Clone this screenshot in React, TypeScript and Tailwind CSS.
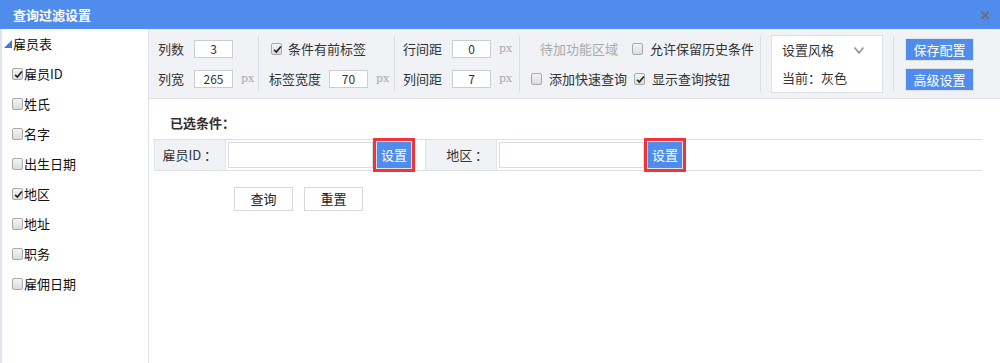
import React from 'react';

const Box: React.FC<{ checked?: boolean }> = ({ checked }) => (
    <span className="relative inline-flex w-[11px] h-[12px] shrink-0 rounded-[2px] border border-[#a9a9a9] bg-gradient-to-b from-[#f4f4f4] to-[#dcdcdc]">
        {checked && (
            <svg viewBox="0 0 12 12" className="absolute left-[1px] top-[1px] w-[9px] h-[9px]">
                <path d="M1.5 6.5 L4.5 9.5 L10.5 2" fill="none" stroke="#222" strokeWidth="2.2" />
            </svg>
        )}
    </span>
);

const NumInput: React.FC<{ value: string }> = ({ value }) => (
    <div className="w-[39px] h-[18px] bg-white border border-[#c9ced6] flex items-center justify-center text-[12px] text-[#333]">
        {value}
    </div>
);

const Px = () => <span className="ml-[8px] text-[11px] text-[#aaa] font-['DejaVu_Serif',serif]">px</span>;

const Sep = () => <div className="w-px my-[6px] bg-[#dcdfe6]" />;

const fields = [
    { name: '雇员ID', checked: true },
    { name: '姓氏' },
    { name: '名字' },
    { name: '出生日期' },
    { name: '地区', checked: true },
    { name: '地址' },
    { name: '职务' },
    { name: '雇佣日期' },
];

const Condition: React.FC<{ label: string; labelW: string }> = ({ label, labelW }) => (
    <>
        <div className={`${labelW} h-full bg-[#f0f2f5] border-r border-[#dfe3ea] flex items-center justify-end pr-[5px] text-[#333] whitespace-pre`}>
            {label}
        </div>
        <div className="h-full flex items-center pl-[2px]">
            <div className="w-[145px] h-[26px] border border-[#d8dce3] bg-white" />
            <button className="ml-[3px] w-[36px] h-[28px] bg-[#4f8cec] border border-[#dfe3ea] text-white outline-[3px] outline-solid outline-[#f2343a]">
                设置
            </button>
        </div>
    </>
);

export default function App() {
    return (
        <div className="w-[1000px] h-[363px] flex flex-col bg-white text-[13px] text-[#333] font-['Microsoft_YaHei','Noto_Sans_CJK_SC',sans-serif] overflow-hidden">
            <div className="h-[29px] shrink-0 bg-[#4f8cec] flex items-center justify-between pl-[13px] pr-[9px]">
                <span className="text-white font-bold text-[13px]">查询过滤设置</span>
                <span className="text-[#6e6e6e] font-bold text-[13px]">✕</span>
            </div>
            <div className="flex flex-1 min-h-0">
                <aside className="w-[149px] shrink-0 border-l-2 border-r border-[#dfe4ec] bg-white text-[#111]">
                    <div className="h-[30px] flex items-center pl-[2px]">
                        <svg viewBox="0 0 8 8" className="w-[8px] h-[8px] mr-[1px]">
                            <polygon points="8,0 8,8 0,8" fill="#3f77d4" />
                        </svg>
                        雇员表
                    </div>
                    {fields.map((f) => (
                        <div key={f.name} className="h-[30px] flex items-center pl-[10px] gap-[1px]">
                            <Box checked={f.checked} />
                            <span>{f.name}</span>
                        </div>
                    ))}
                </aside>
                <div className="flex-1 flex flex-col">
                    <div className="h-[70px] shrink-0 bg-[#f0f2f5] border-b border-[#dfe3ea] flex">
                        <div className="w-[109px] pl-[9px] pt-[5px]">
                            <div className="h-[30px] flex items-center">
                                <span className="w-[36px]">列数</span>
                                <NumInput value="3" />
                            </div>
                            <div className="h-[30px] flex items-center">
                                <span className="w-[36px]">列宽</span>
                                <NumInput value="265" />
                                <Px />
                            </div>
                        </div>
                        <Sep />
                        <div className="w-[135px] pl-[10px] pt-[5px]">
                            <div className="h-[30px] flex items-center pl-[2px] gap-[6px]">
                                <Box checked />
                                <span>条件有前标签</span>
                            </div>
                            <div className="h-[30px] flex items-center">
                                <span className="w-[60px]">标签宽度</span>
                                <NumInput value="70" />
                                <Px />
                            </div>
                        </div>
                        <Sep />
                        <div className="w-[124px] pl-[8px] pt-[5px]">
                            <div className="h-[30px] flex items-center">
                                <span className="w-[49px]">行间距</span>
                                <NumInput value="0" />
                                <Px />
                            </div>
                            <div className="h-[30px] flex items-center">
                                <span className="w-[49px]">列间距</span>
                                <NumInput value="7" />
                                <Px />
                            </div>
                        </div>
                        <Sep />
                        <div className="w-[240px] pl-[11px] pt-[5px]">
                            <div className="h-[30px] flex items-center">
                                <span className="ml-[9px] w-[92px] text-[#aaa]">待加功能区域</span>
                                <Box />
                                <span className="ml-[7px]">允许保留历史条件</span>
                            </div>
                            <div className="h-[30px] flex items-center">
                                <Box />
                                <span className="ml-[7px] w-[85px]">添加快速查询</span>
                                <Box checked />
                                <span className="ml-[7px]">显示查询按钮</span>
                            </div>
                        </div>
                        <Sep />
                        <div className="px-[10px] py-[6px]">
                            <div className="w-[112px] h-[58px] bg-white border border-[#dde1e8] px-[10px] flex flex-col justify-around">
                                <div className="flex items-center justify-between pr-[8px]">
                                    <span>设置风格</span>
                                    <svg viewBox="0 0 10 7" className="w-[10px] h-[7px]">
                                        <path d="M0.5 0.5 L5 6 L9.5 0.5" fill="none" stroke="#8a8a8a" strokeWidth="1.5" />
                                    </svg>
                                </div>
                                <span>当前：灰色</span>
                            </div>
                        </div>
                        <Sep />
                        <div className="pl-[11px] flex flex-col gap-[7px] pt-[9px]">
                            <button className="w-[69px] h-[23px] bg-[#4f8cec] border border-[#dfe3ea] text-white">保存配置</button>
                            <button className="w-[69px] h-[23px] bg-[#4f8cec] border border-[#dfe3ea] text-white">高级设置</button>
                        </div>
                    </div>
                    <div className="pl-[5px] pr-[18px]">
                        <div className="h-[40px] pl-[16px] pt-[8px] flex items-center font-bold text-[#3a2b2b]">已选条件：</div>
                        <div className="h-[32px] flex items-center border-y border-[#dcdfe4]">
                            <div className="h-full border-l border-[#dfe3ea]" />
                            <Condition label={'雇员ID ： '} labelW="w-[71px]" />
                            <div className="w-[13px]" />
                            <div className="h-full border-l border-[#dfe3ea]" />
                            <Condition label={'地区 ： '} labelW="w-[71px]" />
                        </div>
                        <div className="flex gap-[11px] pl-[80px] mt-[16px]">
                            <button className="w-[59px] h-[24px] bg-white border border-[#d5dae2] text-[#222]">查询</button>
                            <button className="w-[59px] h-[24px] bg-white border border-[#d5dae2] text-[#222]">重置</button>
                        </div>
                    </div>
                </div>
            </div>
        </div>
    );
}
